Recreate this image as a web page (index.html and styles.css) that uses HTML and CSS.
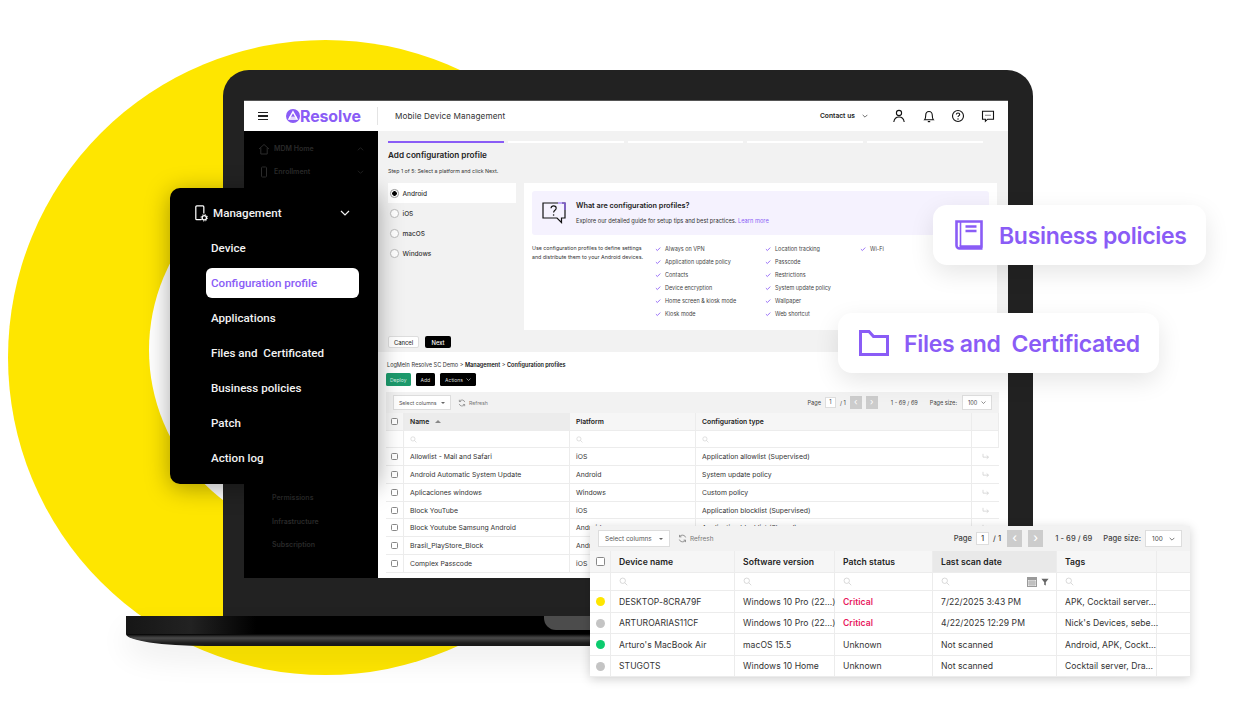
FILE: index.html
```html
<!DOCTYPE html>
<html lang="en">
<head>
<meta charset="utf-8">
<title>Resolve Mobile Device Management</title>
<link rel="stylesheet" href="styles.css">
</head>
<body>
<svg class="sprite" aria-hidden="true">
  <symbol id="i-search" viewBox="0 0 12 12"><circle cx="5" cy="5" r="3.6" fill="none" stroke="currentColor"/><path d="M7.7 7.7 11 11" stroke="currentColor" fill="none"/></symbol>
  <symbol id="i-check" viewBox="0 0 10 10"><path d="M1.5 5.2 4 7.6 8.8 2.6" fill="none" stroke="currentColor" stroke-width="1.4"/></symbol>
  <symbol id="i-arrow" viewBox="0 0 12 10"><path d="M1.5 1v5h8M7 3.5 9.8 6 7 8.5" fill="none" stroke="currentColor"/></symbol>
  <symbol id="i-chev" viewBox="0 0 10 6"><path d="M1 1l4 4 4-4" fill="none" stroke="currentColor" stroke-width="1.2"/></symbol>
  <symbol id="i-refresh" viewBox="0 0 12 12"><path d="M10.2 4.6A4.4 4.4 0 0 0 2.2 3.6M1.8 7.4a4.4 4.4 0 0 0 8 1" fill="none" stroke="currentColor"/><path d="M2 1.2v2.6h2.6M10 10.8V8.2H7.4" fill="none" stroke="currentColor"/></symbol>
</svg>
<main class="stage">
  <div class="sun"><div class="sun-hole"></div></div>

  <section class="laptop">
    <div class="lid">
      <div class="screen">
        <header class="topbar">
          <div class="burger"><span></span><span></span><span></span></div>
          <div class="logo">
            <svg class="logo-mark" viewBox="0 0 16 16"><circle cx="8" cy="8" r="8" fill="#8a5cf6"/><path d="M8 3.2 12.6 11.4H3.4Z" fill="none" stroke="#fff" stroke-width="1.6"/><path d="M3.6 9.4h8.8" stroke="#fff" stroke-width="1.2"/></svg>
            <span>Resolve</span>
          </div>
          <div class="product">Mobile Device Management</div>
          <div class="top-actions">
            <span class="contact">Contact us</span>
            <svg class="contact-chev" viewBox="0 0 10 6"><use href="#i-chev"/></svg>
            <svg class="top-ic first" viewBox="0 0 14 14"><circle cx="7" cy="4" r="2.6" fill="none" stroke="#111" stroke-width="1.1"/><path d="M1.8 13c.5-3.2 2.4-5 5.2-5s4.700 1.800 5.200 5" fill="none" stroke="#111" stroke-width="1.1"/></svg>
            <svg class="top-ic" viewBox="0 0 14 14"><path d="M2.600 10.800h8.800c-.9-1-1.100-2-1.100-4.300 0-2.400-1.300-4-3.300-4s-3.300 1.600-3.300 4c0 2.300-.2 3.300-1.100 4.300Z" fill="none" stroke="#111" stroke-width="1.1"/><path d="M5.800 12.600h2.400" stroke="#111" stroke-width="1.2"/></svg>
            <svg class="top-ic" viewBox="0 0 14 14"><circle cx="7" cy="7" r="5.500" fill="none" stroke="#111" stroke-width="1.1"/><path d="M5.300 5.500c.1-1 .8-1.500 1.700-1.500 1 0 1.700.6 1.700 1.400 0 1.300-1.700 1.300-1.700 2.700" fill="none" stroke="#111" stroke-width="1.100"/><circle cx="7" cy="10" r=".7" fill="#111"/></svg>
            <svg class="top-ic" viewBox="0 0 14 14"><path d="M1.500 2.200h11v8H6.600L4.400 12.300v-2.100H1.500Z" fill="none" stroke="#111" stroke-width="1.100"/><path d="M4.500 6.200h1M6.500 6.200h1M8.500 6.200h1" stroke="#111" stroke-width="1.100"/></svg>
          </div>
        </header>
        <div class="app">
          <nav class="dim-nav">
            <div class="dim-row"><svg class="dim-ic" viewBox="0 0 12 12"><path d="M1 6 6 1.500 11 6M2.800 5v6h6.400V5" fill="none" stroke="#2c2c2c"/></svg><span>MDM Home</span><svg class="dim-chev up" viewBox="0 0 10 6"><use href="#i-chev"/></svg></div>
            <div class="dim-row"><svg class="dim-ic" viewBox="0 0 12 12"><rect x="3.500" y="1" width="5" height="10" rx=".8" fill="none" stroke="#2c2c2c"/></svg><span>Enrollment</span><svg class="dim-chev" viewBox="0 0 10 6"><use href="#i-chev"/></svg></div>
            <div class="dim-low">
              <span>Permissions</span>
              <span>Infrastructure</span>
              <span>Subscription</span>
            </div>
          </nav>
          <div class="content">
            <section class="wizard">
              <div class="steps"><i class="on"></i><i></i><i></i><i></i><i></i></div>
              <h1 class="wiz-title">Add configuration profile</h1>
              <p class="wiz-step">Step 1 of 5: Select a platform and click Next.</p>
              <div class="wiz-body">
                <ul class="platforms">
                  <li class="sel"><b class="radio on"></b>Android</li>
                  <li><b class="radio"></b>iOS</li>
                  <li><b class="radio"></b>macOS</li>
                  <li><b class="radio"></b>Windows</li>
                </ul>
                <div class="panel">
                  <div class="callout">
                    <svg class="callout-ic" viewBox="0 0 24 22"><path d="M16 1H1v15h14l4.500 4.500V16H23V1h-3" fill="none" stroke="#111" stroke-width="1.200"/><path d="M16 1h7v7" fill="none" stroke="#8a5cf6" stroke-width="1.200"/><path d="M9 6.200c.2-1.500 1.200-2.300 2.600-2.300 1.500 0 2.600 1 2.600 2.300 0 2-2.600 2.200-2.600 4.400" fill="none" stroke="#111" stroke-width="1.100"/><circle cx="11.600" cy="13" r=".8" fill="#111"/></svg>
                    <div>
                      <div class="callout-title">What are configuration profiles?</div>
                      <div class="callout-sub">Explore our detailed guide for setup tips and best practices. <a>Learn more</a></div>
                    </div>
                  </div>
                  <div class="info">
                    <p class="info-text">Use configuration profiles to define settings<br>and distribute them to your Android devices.</p>
                    <ul class="checks">
                      <li><svg viewBox="0 0 10 10"><use href="#i-check"/></svg>Always on VPN</li>
                      <li><svg viewBox="0 0 10 10"><use href="#i-check"/></svg>Application update policy</li>
                      <li><svg viewBox="0 0 10 10"><use href="#i-check"/></svg>Contacts</li>
                      <li><svg viewBox="0 0 10 10"><use href="#i-check"/></svg>Device encryption</li>
                      <li><svg viewBox="0 0 10 10"><use href="#i-check"/></svg>Home screen &amp; kiosk mode</li>
                      <li><svg viewBox="0 0 10 10"><use href="#i-check"/></svg>Kiosk mode</li>
                      <li><svg viewBox="0 0 10 10"><use href="#i-check"/></svg>Location tracking</li>
                      <li><svg viewBox="0 0 10 10"><use href="#i-check"/></svg>Passcode</li>
                      <li><svg viewBox="0 0 10 10"><use href="#i-check"/></svg>Restrictions</li>
                      <li><svg viewBox="0 0 10 10"><use href="#i-check"/></svg>System update policy</li>
                      <li><svg viewBox="0 0 10 10"><use href="#i-check"/></svg>Wallpaper</li>
                      <li><svg viewBox="0 0 10 10"><use href="#i-check"/></svg>Web shortcut</li>
                      <li><svg viewBox="0 0 10 10"><use href="#i-check"/></svg>Wi-Fi</li>
                    </ul>
                  </div>
                </div>
              </div>
              <div class="wiz-foot"><button class="btn ghost">Cancel</button><button class="btn dark">Next</button></div>
            </section>
            <section class="listing">
              <div class="crumbs">LogMeIn Resolve SC Demo &gt; <b>Management</b> &gt; <b>Configuration profiles</b></div>
              <div class="list-actions"><button class="act green">Deploy</button><button class="act">Add</button><button class="act">Actions <svg viewBox="0 0 10 6"><use href="#i-chev"/></svg></button></div>
              <div class="grid-s">
                <div class="tool-s">
                  <div class="sel-s">Select columns<em></em></div>
                  <div class="ref-s"><svg viewBox="0 0 12 12"><use href="#i-refresh"/></svg>Refresh</div>
                  <div class="pager-s">
                    <span>Page</span><span class="pg-in">1</span><span>/ 1</span>
                    <span class="pg-btn">‹</span><span class="pg-btn">›</span>
                    <span class="pg-range">1 - 69 / 69</span>
                    <span>Page size:</span>
                    <span class="pg-size">100 <svg viewBox="0 0 10 6"><use href="#i-chev"/></svg></span>
                  </div>
                </div>
                <div class="row-s head"><div class="cb-cell"><b class="cb"></b></div><div class="sorted">Name <i class="caret"></i></div><div>Platform</div><div>Configuration type</div><div></div></div>
                <div class="row-s filt"><div></div><div><svg class="srch" viewBox="0 0 12 12"><use href="#i-search"/></svg></div><div><svg class="srch" viewBox="0 0 12 12"><use href="#i-search"/></svg></div><div><svg class="srch" viewBox="0 0 12 12"><use href="#i-search"/></svg></div><div></div></div>
                <div class="row-s"><div class="cb-cell"><b class="cb"></b></div><div>Allowlist - Mail and Safari</div><div>iOS</div><div>Application allowlist (Supervised)</div><div class="go"><svg viewBox="0 0 12 10"><use href="#i-arrow"/></svg></div></div>
                <div class="row-s"><div class="cb-cell"><b class="cb"></b></div><div>Android Automatic System Update</div><div>Android</div><div>System update policy</div><div class="go"><svg viewBox="0 0 12 10"><use href="#i-arrow"/></svg></div></div>
                <div class="row-s"><div class="cb-cell"><b class="cb"></b></div><div>Aplicaciones windows</div><div>Windows</div><div>Custom policy</div><div class="go"><svg viewBox="0 0 12 10"><use href="#i-arrow"/></svg></div></div>
                <div class="row-s"><div class="cb-cell"><b class="cb"></b></div><div>Block YouTube</div><div>iOS</div><div>Application blocklist (Supervised)</div><div class="go"><svg viewBox="0 0 12 10"><use href="#i-arrow"/></svg></div></div>
                <div class="row-s"><div class="cb-cell"><b class="cb"></b></div><div>Block Youtube Samsung Android</div><div>Android</div><div>Application blocklist (Shared)</div><div class="go"><svg viewBox="0 0 12 10"><use href="#i-arrow"/></svg></div></div>
                <div class="row-s"><div class="cb-cell"><b class="cb"></b></div><div>Brasil_PlayStore_Block</div><div>Android</div><div>Application blocklist</div><div class="go"></div></div>
                <div class="row-s"><div class="cb-cell"><b class="cb"></b></div><div>Complex Passcode</div><div>iOS</div><div>Passcode</div><div class="go"></div></div>
              </div>
            </section>
          </div>
        </div>
      </div>
    </div>
    <div class="base"><span class="notch"></span></div>
  </section>

  <nav class="menu">
    <div class="menu-head">
      <svg class="menu-ic" viewBox="0 0 14 18"><path d="M7.500 15.500H2.500a1 1 0 0 1-1-1V2a1 1 0 0 1 1-1h6.500a1 1 0 0 1 1 1v7" fill="none" stroke="#fff" stroke-width="1.300"/><circle cx="10.500" cy="13.500" r="2.300" fill="none" stroke="#fff" stroke-width="1.400"/><circle cx="10.500" cy="13.500" r="3.500" fill="none" stroke="#fff" stroke-width="1" stroke-dasharray="1.200 1.550"/></svg>
      <span>Management</span>
      <svg class="menu-chev" viewBox="0 0 10 6"><use href="#i-chev"/></svg>
    </div>
    <a class="menu-item">Device</a>
    <a class="menu-item active">Configuration profile</a>
    <a class="menu-item">Applications</a>
    <a class="menu-item">Files and&nbsp; Certificated</a>
    <a class="menu-item">Business policies</a>
    <a class="menu-item">Patch</a>
    <a class="menu-item">Action log</a>
  </nav>

  <div class="pill pill-policies">
    <svg class="book" viewBox="0 0 28 30"><path d="M1.500 25.500V1.500h25v25H4.500M1.500 25.500a3 3 0 0 0 3 3H27.500" fill="none" stroke="#8a5cf6" stroke-width="2.600"/><path d="M5.500 2v24" stroke="#8a5cf6" stroke-width="1.600"/><path d="M10.500 6.500h11M10.500 11h11" stroke="#8a5cf6" stroke-width="2.400"/></svg>
    <span class="pill-label">Business policies</span>
  </div>
  <div class="pill pill-files">
    <svg class="folder" viewBox="0 0 30 26"><path d="M1.500 1.500h8.500l4.500 5h14v18H1.500Z" fill="none" stroke="#8a5cf6" stroke-width="3"/></svg>
    <span class="pill-label">Files and&nbsp; Certificated</span>
  </div>

  <section class="devices">
    <div class="tool-l">
      <div class="sel-l">Select columns<em></em></div>
      <div class="ref-l"><svg viewBox="0 0 12 12"><use href="#i-refresh"/></svg>Refresh</div>
      <div class="pager-l">
        <span>Page</span><span class="pg-in">1</span><span>/ 1</span>
        <span class="pg-btn">‹</span><span class="pg-btn">›</span>
        <span class="pg-range">1 - 69 / 69</span>
        <span class="pg-lab">Page size:</span>
        <span class="pg-size">100 <svg viewBox="0 0 10 6"><use href="#i-chev"/></svg></span>
      </div>
    </div>
    <div class="row-l head"><div class="cb-cell"><b class="cb"></b></div><div>Device name</div><div>Software version</div><div>Patch status</div><div class="sorted">Last scan date</div><div>Tags</div><div></div></div>
    <div class="row-l filt"><div></div><div><svg class="srch" viewBox="0 0 12 12"><use href="#i-search"/></svg></div><div><svg class="srch" viewBox="0 0 12 12"><use href="#i-search"/></svg></div><div><svg class="srch" viewBox="0 0 12 12"><use href="#i-search"/></svg></div><div class="date-filter"><svg class="srch" viewBox="0 0 12 12"><use href="#i-search"/></svg><svg class="cal" viewBox="0 0 10 10"><rect width="10" height="10" fill="#9a9a9a"/><path d="M1 3h8v6H1z" fill="#e8e8e8"/><path d="M1 5h8M1 7h8M3 3v6M5 3v6M7 3v6" stroke="#9a9a9a" stroke-width=".6"/></svg><svg class="fun" viewBox="0 0 10 10"><path d="M.5 1h9L6 5.200V9.500L4 8.500V5.200Z" fill="#666"/></svg></div><div><svg class="srch" viewBox="0 0 12 12"><use href="#i-search"/></svg></div><div></div></div>
    <div class="row-l"><div class="cb-cell"><b class="dot yellow"></b></div><div>DESKTOP-8CRA79F</div><div>Windows 10 Pro (22...)</div><div class="crit">Critical</div><div>7/22/2025 3:43 PM</div><div>APK, Cocktail server...</div><div></div></div>
    <div class="row-l"><div class="cb-cell"><b class="dot grey"></b></div><div>ARTUROARIAS11CF</div><div>Windows 10 Pro (22...)</div><div class="crit">Critical</div><div>4/22/2025 12:29 PM</div><div>Nick's Devices, sebe...</div><div></div></div>
    <div class="row-l"><div class="cb-cell"><b class="dot green"></b></div><div>Arturo's MacBook Air</div><div>macOS 15.5</div><div>Unknown</div><div>Not scanned</div><div>Android, APK, Cockt...</div><div></div></div>
    <div class="row-l"><div class="cb-cell"><b class="dot grey"></b></div><div>STUGOTS</div><div>Windows 10 Home</div><div>Unknown</div><div>Not scanned</div><div>Cocktail server, Dra...</div><div></div></div>
  </section>
</main>
</body>
</html>
```
FILE: styles.css
```css
* { box-sizing: border-box; }
html, body { margin: 0; padding: 0; background: #fff; }
body { font-family: Inter, "Liberation Sans", sans-serif; color: #222; overflow: hidden; }
ul { list-style: none; margin: 0; padding: 0; }
p, h1 { margin: 0; }
button { font-family: inherit; border: 0; padding: 0; }
.sprite { display: none; }

.stage { position: relative; width: 1252px; height: 716px; overflow: hidden; background: #fff; }

/* backdrop */
.sun { position: absolute; left: 8px; top: 40px; width: 635px; height: 635px; border-radius: 50%; background: #fee600; }
.sun-hole { position: absolute; left: 141px; top: 121px; width: 378px; height: 378px; border-radius: 50%; background: #fff; }

/* laptop */
.laptop { position: absolute; left: 126px; top: 70px; width: 1004px; height: 576px; display: flex; flex-direction: column; align-items: center; }
.lid { width: 810px; height: 546px; flex: none; background: #222; border-radius: 26px 26px 0 0; padding: 30px 25px 38px 21px; }
.screen { height: 478px; background: #fff; border-top: 1px solid #555; display: flex; flex-direction: column; overflow: hidden; }
.base { position: relative; flex: none; width: 1004px; height: 30px; border-radius: 0 0 80px 80px / 0 0 12px 12px; background: linear-gradient(180deg, #000 0 18px, #2a2a2a 20px, #4a4a4a 22px, #1c1c1c 27px, #161616 30px); box-shadow: 0 14px 30px rgba(0,0,0,.07); }
.base::before { content: ""; position: absolute; left: 0; top: 0; width: 130px; height: 18px; background: linear-gradient(90deg, #161616, #222 50%, #000); }
.notch { position: absolute; left: 418px; top: 0; width: 168px; height: 14px; background: #4c4c4c; border-radius: 0 0 12px 12px; }

/* top bar */
.topbar { flex: none; height: 30px; display: flex; align-items: center; padding-left: 14px; background: #fff; }
.burger { width: 10px; display: flex; flex-direction: column; gap: 2px; }
.burger span { height: 1.400px; background: #222; }
.logo { display: flex; align-items: center; margin-left: 18px; color: #8a5cf6; font-weight: 700; font-size: 15.900px; width: 92px; height: 18px; border-right: 1px solid #e4e4e4; letter-spacing: -.1px; }
.logo-mark { width: 14px; height: 14px; flex: none; }
.product { margin-left: 17px; font-size: 8.200px; color: #333; letter-spacing: .1px; }
.top-actions { margin-left: auto; display: flex; align-items: center; padding-right: 13px; }
.contact { font-size: 6.700px; font-weight: 600; color: #222; }
.contact-chev { width: 6px; height: 4px; margin-left: 7px; color: #333; }
.top-ic { width: 14px; height: 14px; margin-left: 15.700px; }
.top-ic.first { margin-left: 24px; }

.app { flex: 1; min-height: 0; display: flex; }

/* dim navigation inside screen */
.dim-nav { flex: none; width: 134px; background: #000; color: #2a2a2a; font-size: 7px; font-weight: 600; padding-top: 6px; position: relative; }
.dim-row { height: 23px; display: flex; align-items: center; padding: 0 14px; }
.dim-ic { width: 12px; height: 12px; margin-right: 4px; }
.dim-chev { width: 7px; height: 4px; margin-left: auto; color: #2a2a2a; }
.dim-chev.up { transform: rotate(180deg); }
.dim-low { margin-top: 311px; padding-left: 28px; display: flex; flex-direction: column; gap: 15.500px; }
.dim-low span { line-height: 8px; }

/* wizard */
.content { flex: 1; min-width: 0; display: flex; flex-direction: column; background: #fff; }
.wizard { flex: none; height: 221px; background: #f2f2f2; padding: 10px 11px 0 10px; }
.steps { display: flex; gap: 4px; width: 595px; }
.steps i { flex: 1; height: 2px; background: #fff; }
.steps i.on { background: #8a5cf6; }
.wiz-title { font-size: 8.200px; line-height: 11px; font-weight: 600; color: #222; margin-top: 7px; }
.wiz-step { font-size: 5.300px; line-height: 8px; color: #333; margin-top: 6px; }
.wiz-body { display: flex; margin-top: 8px; height: 147px; gap: 8px; }
.platforms { width: 128px; flex: none; font-size: 6.500px; font-weight: 500; color: #333; }
.platforms li { height: 20px; display: flex; align-items: center; padding: 1px 0 0 2px; }
.platforms li.sel { background: #fff; }
.radio { width: 8.500px; height: 8.500px; border: 1px solid #bbb; border-radius: 50%; margin-right: 4px; background: #fff; }
.radio.on { background: radial-gradient(circle, #000 0 2px, #fff 2.600px); border-color: #999; }
.panel { width: 473px; background: #fff; padding: 8px; }
.callout { height: 44px; background: #f5f2fe; border-radius: 3px; display: flex; align-items: center; padding-left: 10px; }
.callout-ic { width: 24px; height: 22px; margin-right: 10px; flex: none; }
.callout-title { font-size: 7.300px; font-weight: 600; color: #222; line-height: 10px; }
.callout-sub { font-size: 5.700px; color: #333; line-height: 8px; margin-top: 6px; }
.callout-sub a { color: #8a5cf6; }
.info { display: flex; margin-top: 9px; }
.info-text { width: 123px; flex: none; font-size: 5.300px; line-height: 9px; color: #333; white-space: nowrap; }
.checks { display: grid; grid-auto-flow: column; grid-template-rows: repeat(6, 13px); grid-template-columns: 110px 95px 60px; font-size: 5.500px; color: #444; }
.checks li { display: flex; align-items: center; height: 9px; }
.checks svg { width: 6px; height: 6px; margin-right: 4px; color: #8a5cf6; flex: none; }
.wiz-foot { display: flex; gap: 6px; margin-top: 6px; }
.btn { height: 12px; border-radius: 2px; font-size: 5.800px; font-weight: 500; }
.btn.ghost { width: 31px; background: #fff; border: 1px solid #ddd; color: #333; }
.btn.dark { width: 26px; background: #000; color: #fff; }

/* listing */
.listing { flex: 1; min-height: 0; padding: 9px 9px 0 8px; background: #fff; overflow: hidden; }
.crumbs { font-size: 5.550px; line-height: 8px; color: #333; padding-left: 1px; }
.crumbs b { font-weight: 600; color: #111; }
.list-actions { display: flex; gap: 5px; margin-top: 4px; }
.act { height: 13px; padding: 0 5px; background: #000; color: #ddd; font-size: 5px; border-radius: 1.500px; display: flex; align-items: center; gap: 3px; }
.act.green { background: #1d9a6c; color: #d5f0e5; padding: 0 4px; }
.act svg { width: 5px; height: 3px; }

.grid-s { margin-top: 6px; width: 613px; font-size: 6.850px; color: #333; }
.tool-s { height: 21px; background: #f2f2f2; display: flex; align-items: center; padding-left: 7px; font-size: 5.200px; color: #555; }
.sel-s { width: 58px; height: 15px; background: #fff; border: 1px solid #ddd; display: flex; align-items: center; justify-content: space-between; padding: 0 5px; }
.sel-s em, .sel-l em { border: 2px solid transparent; border-top: 2.500px solid #666; border-bottom: 0; }
.ref-s { display: flex; align-items: center; gap: 3px; margin-left: 7px; color: #777; }
.ref-s svg { width: 8px; height: 8px; }
.pager-s { margin-left: auto; display: flex; align-items: center; gap: 4px; padding-right: 7px; font-size: 5.600px; color: #444; }
.pager-s .pg-in { width: 11px; height: 11px; background: #fff; border: 1px solid #ddd; text-align: center; line-height: 9px; }
.pager-s .pg-btn { width: 12px; height: 13px; background: #ccc; color: #fff; text-align: center; line-height: 12px; font-size: 9px; }
.pager-s .pg-range { margin: 0 8px 0 9px; }
.pager-s .pg-size { width: 30px; height: 15px; background: #fff; border: 1px solid #ddd; display: flex; align-items: center; justify-content: space-between; padding: 0 5px; margin-left: 1px; }
.pager-s .pg-size svg { width: 5px; height: 3px; }

.row-s { display: grid; grid-template-columns: 18px 166px 126px 276px 27px; height: 17.800px; border-bottom: 1px solid #ececec; }
.row-s > div { display: flex; align-items: center; padding-left: 6px; border-right: 1px solid #ececec; min-width: 0; white-space: nowrap; }
.row-s > div.cb-cell { padding-left: 5px; }
.row-s.head { height: 18px; background: #f6f6f6; font-weight: 600; font-size: 6.800px; color: #222; }
.row-s.head .sorted { background: #ececec; }
.row-s.filt { height: 17.300px; }
.caret { display: inline-block; margin-left: 6px; border: 3px solid transparent; border-bottom: 3px solid #888; border-top: 0; }
.cb { display: block; width: 7px; height: 7px; border: 1px solid #888; border-radius: 1.500px; background: #fff; }
.srch { width: 7px; height: 7px; color: #ccc; }
.go { justify-content: center; padding-left: 0 !important; color: #c8c8c8; border-right: 0 !important; }
.go svg { width: 8px; height: 7px; }

/* floating menu */
.menu { position: absolute; left: 170px; top: 188px; width: 208px; height: 296px; background: #000; border-radius: 10px; box-shadow: 0 4px 24px rgba(0,0,0,.35); padding-top: 8px; color: #f2f2f2; font-family: Roboto, sans-serif; font-weight: 500; font-size: 11.600px; }
.menu-head { height: 36px; display: flex; align-items: center; padding: 0 28px 2px 24px; }
.menu-ic { width: 14px; height: 17px; margin-right: 5px; flex: none; }
.menu-chev { width: 10px; height: 6px; margin-left: auto; color: #f2f2f2; }
.menu-item { display: flex; align-items: center; height: 30px; margin: 0 19px 5px 36px; padding-left: 5px; border-radius: 6px; position: relative; top: 1px; }
.menu-item.active { background: #fff; color: #8a5cf6; }

/* floating pills */
.pill { position: absolute; height: 60px; background: #fff; border-radius: 14px; display: flex; align-items: center; box-shadow: 0 8px 24px rgba(0,0,0,.1); color: #8a5cf6; font-size: 23px; font-weight: 600; letter-spacing: -.3px; white-space: nowrap; }
.pill-label { padding-top: 2px; }
.pill-policies { left: 933px; top: 205px; width: 273px; padding-left: 22px; }
.pill-files { left: 838px; top: 313px; width: 321px; padding-left: 21px; }
.book { width: 28px; height: 30px; margin-right: 16px; }
.folder { width: 30px; height: 26px; margin-right: 15px; }

/* device table */
.devices { position: absolute; left: 590px; top: 526px; width: 600px; height: 151px; background: #fff; box-shadow: 0 2px 10px rgba(0,0,0,.18); font-size: 8.600px; color: #333; letter-spacing: .04px; }
.tool-l { height: 25px; background: #f2f2f2; display: flex; align-items: center; padding-left: 8px; font-size: 6.400px; color: #555; }
.sel-l { width: 72px; height: 17px; background: #fff; border: 1px solid #ddd; display: flex; align-items: center; justify-content: space-between; padding: 0 6px; }
.ref-l { display: flex; align-items: center; gap: 3px; margin-left: 8px; color: #777; }
.ref-l svg { width: 9px; height: 9px; }
.pager-l { margin-left: auto; display: flex; align-items: center; gap: 4px; padding-right: 8px; font-size: 7.600px; color: #444; font-weight: 500; }
.pager-l .pg-in { width: 13px; height: 13px; background: #fff; border: 1px solid #ddd; text-align: center; line-height: 11px; }
.pager-l .pg-btn { width: 15px; height: 17px; background: #ccc; color: #fff; text-align: center; line-height: 15px; font-size: 12px; margin-left: 2px; }
.pager-l .pg-range { margin: 0 7px 0 8px; }
.pager-l .pg-size { width: 37px; height: 17px; background: #fff; border: 1px solid #ddd; display: flex; align-items: center; justify-content: space-between; padding: 0 6px; font-size: 6.400px; font-weight: 400; }
.pager-l .pg-size svg { width: 6px; height: 4px; }

.row-l { display: grid; grid-template-columns: 21px 124px 100px 98px 124px 100px 33px; height: 21.500px; border-bottom: 1px solid #ececec; }
.row-l > div { display: flex; align-items: center; padding: .5px 0 0 8px; border-right: 1px solid #ececec; min-width: 0; white-space: nowrap; }
.row-l > div:last-child { border-right: 0; }
.row-l > div.cb-cell { padding-left: 6px; }
.row-l.head { height: 22px; background: #f6f6f6; font-weight: 600; color: #222; }
.row-l.head .sorted { background: #e9e9e9; }
.row-l.filt { height: 18px; }
.row-l .cb { width: 9px; height: 9px; }
.row-l .srch { width: 9px; height: 9px; }
.date-filter .cal { width: 10px; height: 10px; margin-left: auto; }
.date-filter .fun { width: 8px; height: 8px; margin: 0 7px 0 4px; }
.crit { color: #e8175d; font-weight: 600; }
.dot { display: block; width: 9px; height: 9px; border-radius: 50%; }
.dot.yellow { background: #fee600; }
.dot.grey { background: #c4c4c4; }
.dot.green { background: #0ccb6e; }
```
